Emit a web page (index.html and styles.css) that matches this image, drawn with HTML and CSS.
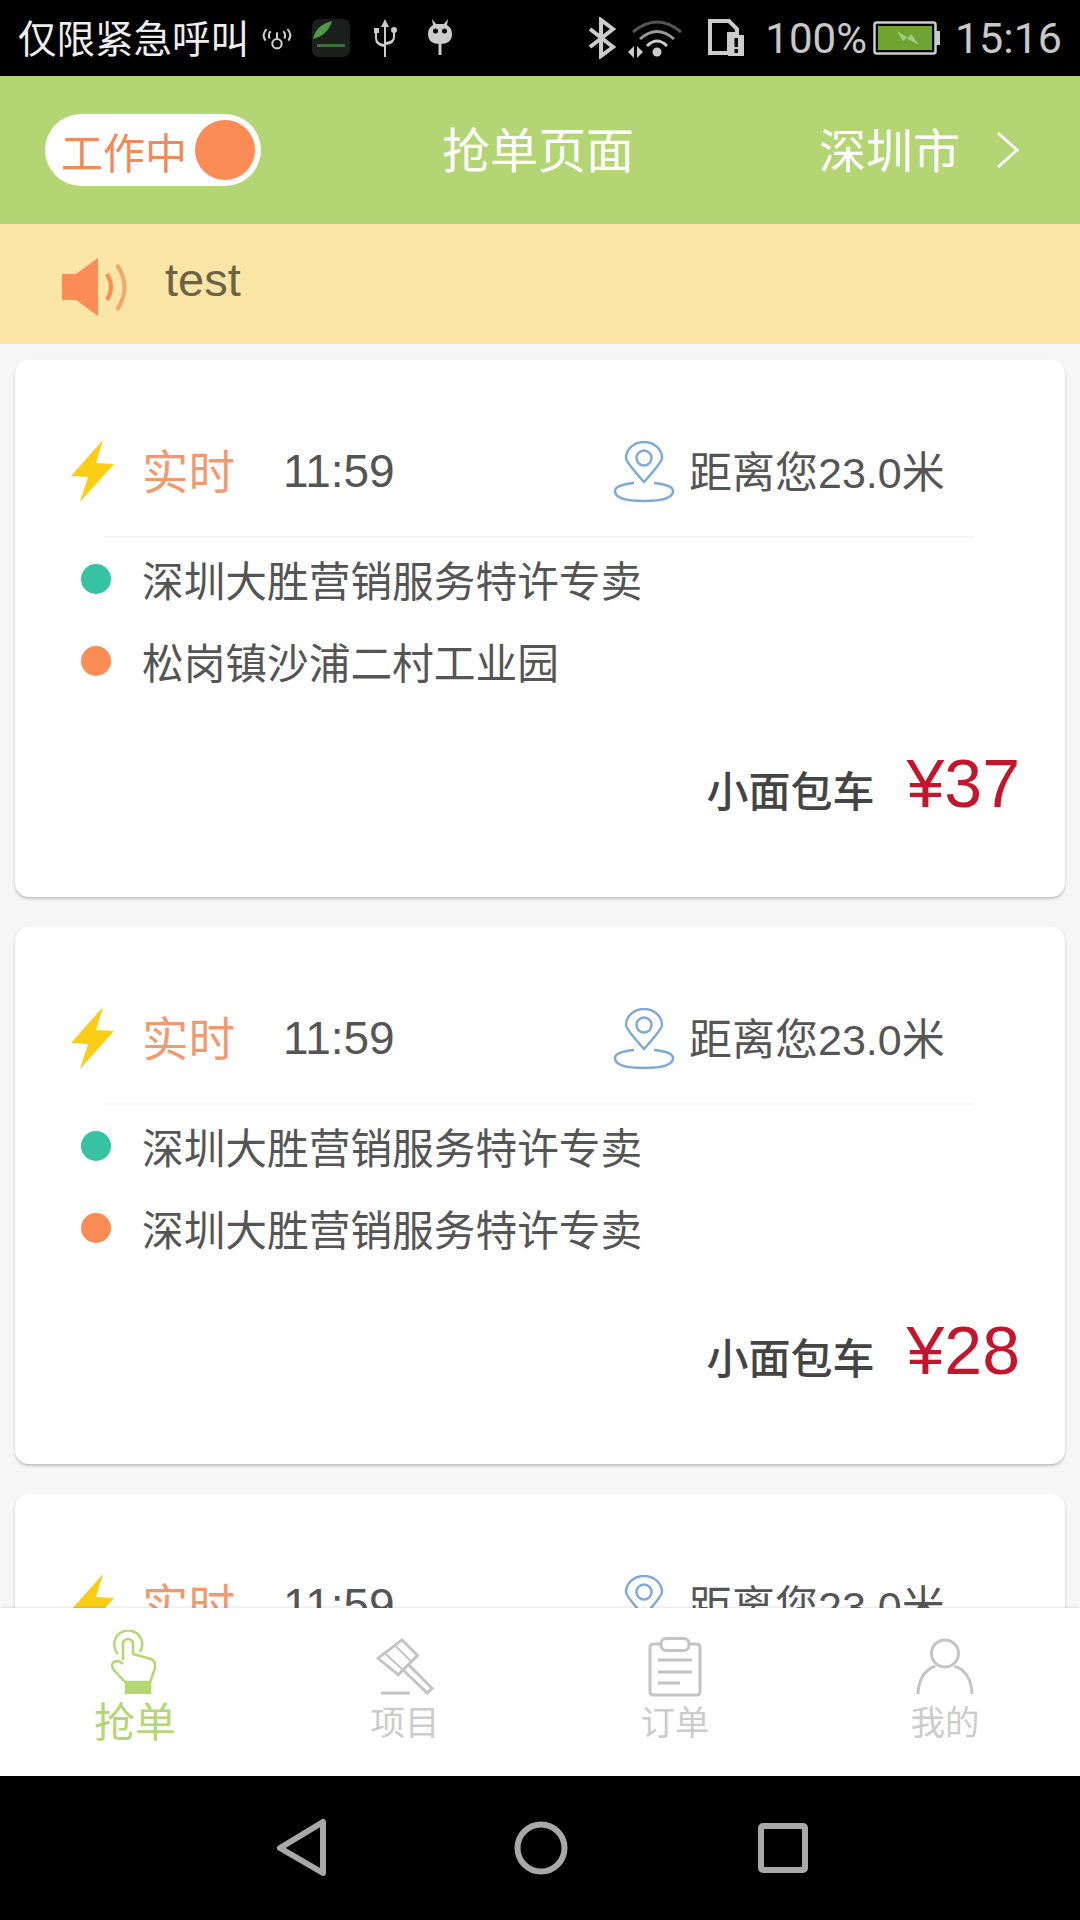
FILE: index.html
```html
<!DOCTYPE html>
<html>
<head>
  <meta charset="UTF-8">
  <title>抢单页面</title>
  <link rel="stylesheet" href="styles.css">
</head>
<body>
  <div class="phone">
    <div class="status-bar">
      <span class="carrier">仅限紧急呼叫</span>
      <svg class="st-signal" viewBox="0 0 34 24" fill="none" stroke="#ccc" stroke-width="2"><path d="M7 3Q2 8 6 14M11 5Q8 8 10 12M27 3Q32 8 28 14M23 5Q26 8 24 12"/><circle cx="17" cy="17" r="4.5"/><path d="M17 12V6"/></svg>
      <svg class="st-app" viewBox="0 0 38 38"><rect width="38" height="38" rx="7" fill="#1b1f1b"/><path d="M1 20Q4 6 20 2Q16 16 1 20Z" fill="#4f9a48"/><rect x="5" y="25" width="28" height="3" fill="#3f6f3c"/></svg>
      <svg class="st-usb" viewBox="0 0 24 38" fill="#ccc"><path d="M11 8V38H13V8ZM12 0L8 8H16Z"/><path d="M4 12V19Q4 24 11 25V28Q2 27 2 19V12ZM20 12V18Q20 22 13 23V26Q22 25 22 18V12Z"/><rect x="1" y="9" width="5" height="5"/><circle cx="21" cy="11" r="3"/></svg>
      <svg class="st-bug" viewBox="0 0 26 38" fill="#ccc"><path d="M5 0L9 5H17L21 0L20 6Q25 9 25 15Q25 25 13 25Q1 25 1 15Q1 9 6 6Z"/><rect x="11.5" y="25" width="3" height="11"/><circle cx="8.5" cy="12" r="2.5" fill="#000"/><circle cx="17.5" cy="12" r="2.5" fill="#000"/></svg>
      <span class="status-gap"></span>
      <svg class="st-bt" viewBox="0 0 30 42" fill="none" stroke="#ccc" stroke-width="4"><path d="M3 12L26 30L14 39V3L26 12L3 30"/></svg>
      <svg class="st-wifi" viewBox="0 0 56 40" fill="none"><path d="M6 14Q30 -6 54 14" stroke="#555" stroke-width="3"/><path d="M13 21Q30 6 47 21" stroke="#999" stroke-width="3"/><path d="M20 28Q30 18 40 28" stroke="#ccc" stroke-width="3"/><circle cx="30" cy="34" r="4.5" fill="#ccc"/><path d="M7 28L1 34L7 40ZM10 28L16 34L10 40Z" fill="#ccc"/></svg>
      <svg class="st-sim" viewBox="0 0 38 38"><path d="M3 2H22L30 10V15H22V34H3Z" fill="none" stroke="#ccc" stroke-width="4"/><rect x="21" y="16" width="16" height="21" fill="#ccc"/><rect x="27.5" y="19" width="3.5" height="9"/><rect x="27.5" y="30" width="3.5" height="4"/></svg>
      <span class="st-text st-percent">100%</span>
      <svg class="st-battery" viewBox="0 0 68 34"><rect x="1.5" y="1.5" width="61" height="31" rx="2" fill="#000" stroke="#ccc" stroke-width="2.5"/><rect x="5" y="5" width="54" height="24" fill="#6ea42f"/><rect x="63" y="10" width="4" height="14" fill="#ccc"/><path d="M24 10L35 17L38 13L46 24L33 17L30 20Z" fill="#a9c98a"/></svg>
      <span class="st-text st-time">15:16</span>
    </div>

    <div class="header">
      <div class="work-toggle">
        <span>工作中</span>
        <i class="work-dot"></i>
      </div>
      <div class="header-title">抢单页面</div>
      <div class="header-city">
        <span>深圳市</span>
        <svg class="city-arrow" viewBox="0 0 26 40" fill="none" stroke="#fff" stroke-width="3"><path d="M3 3L22 20L3 37"/></svg>
      </div>
    </div>

    <div class="notice">
      <svg class="notice-icon" viewBox="0 0 68 62" fill="#fb8c55"><path d="M0 18H14L36 2V60L14 44H0Z"/><path d="M45 18Q53 31 45 44" fill="none" stroke="#fb8c55" stroke-width="4"/><path d="M55 9Q70 31 55 54" fill="none" stroke="#f5a56e" stroke-width="4"/></svg>
      <span class="notice-text">test</span>
    </div>

    <div class="order-list">
      <div class="order-card">
        <div class="order-top">
          <svg class="bolt" viewBox="0 0 48 64"><path d="M35 1L3 37L20 38L12 63L46 25L28 24Z" fill="#fbcd14"/></svg>
          <span class="order-type">实时</span>
          <span class="order-time">11:59</span>
          <svg class="pin" viewBox="0 0 62 62" fill="none" stroke="#7fa9d6" stroke-width="2.5"><path d="M31 41Q13 21 13 17A18 16 0 0 1 49 17Q49 21 31 41Z"/><circle cx="31" cy="17" r="7.5"/><path d="M21 42Q2 44 2 50Q2 60 31 60Q60 60 60 50Q60 44 41 42"/></svg>
          <span class="order-distance">距离您23.0米</span>
        </div>
        <div class="order-address"><i class="dot dot-start"></i>深圳大胜营销服务特许专卖</div>
        <div class="order-address"><i class="dot dot-end"></i>松岗镇沙浦二村工业园</div>
        <div class="order-bottom">
          <span class="car-type">小面包车</span>
          <span class="order-price">¥37</span>
        </div>
      </div>

      <div class="order-card">
        <div class="order-top">
          <svg class="bolt" viewBox="0 0 48 64"><path d="M35 1L3 37L20 38L12 63L46 25L28 24Z" fill="#fbcd14"/></svg>
          <span class="order-type">实时</span>
          <span class="order-time">11:59</span>
          <svg class="pin" viewBox="0 0 62 62" fill="none" stroke="#7fa9d6" stroke-width="2.5"><path d="M31 41Q13 21 13 17A18 16 0 0 1 49 17Q49 21 31 41Z"/><circle cx="31" cy="17" r="7.5"/><path d="M21 42Q2 44 2 50Q2 60 31 60Q60 60 60 50Q60 44 41 42"/></svg>
          <span class="order-distance">距离您23.0米</span>
        </div>
        <div class="order-address"><i class="dot dot-start"></i>深圳大胜营销服务特许专卖</div>
        <div class="order-address"><i class="dot dot-end"></i>深圳大胜营销服务特许专卖</div>
        <div class="order-bottom">
          <span class="car-type">小面包车</span>
          <span class="order-price">¥28</span>
        </div>
      </div>

      <div class="order-card">
        <div class="order-top">
          <svg class="bolt" viewBox="0 0 48 64"><path d="M35 1L3 37L20 38L12 63L46 25L28 24Z" fill="#fbcd14"/></svg>
          <span class="order-type">实时</span>
          <span class="order-time">11:59</span>
          <svg class="pin" viewBox="0 0 62 62" fill="none" stroke="#7fa9d6" stroke-width="2.5"><path d="M31 41Q13 21 13 17A18 16 0 0 1 49 17Q49 21 31 41Z"/><circle cx="31" cy="17" r="7.5"/><path d="M21 42Q2 44 2 50Q2 60 31 60Q60 60 60 50Q60 44 41 42"/></svg>
          <span class="order-distance">距离您23.0米</span>
        </div>
      </div>
    </div>

    <div class="tab-bar">
      <div class="tab tab-active">
        <svg class="tab-icon tab-icon-hand" viewBox="0 0 52 64" fill="none" stroke="#b5d675" stroke-width="2.5"><path d="M9 24A14 14 0 1 1 31 22"/><path d="M14 30V14A5 5 0 0 1 24 14V24L42 29Q47 31 46 38L41 53H17L4 39Q1 32 8 31Q11 31 14 34"/><rect x="17" y="52" width="24" height="11" fill="#b5d675"/></svg>
        <span class="tab-label">抢单</span>
      </div>
      <div class="tab">
        <svg class="tab-icon" viewBox="0 0 60 60" fill="none" stroke="#c4c4c4" stroke-width="3"><path d="M27 2L43 18L23 38L2 21Z"/><path d="M19 7L37 25M8 15L27 32" stroke-width="2"/><path d="M33 27L58 52L53 57L27 32"/><path d="M5 57H35"/></svg>
        <span class="tab-label">项目</span>
      </div>
      <div class="tab">
        <svg class="tab-icon" viewBox="0 0 54 60" fill="none" stroke="#c4c4c4" stroke-width="3"><rect x="2" y="7" width="50" height="51" rx="3"/><rect x="13" y="1.500" width="28" height="12" rx="5" fill="#fff"/><path d="M10 23H44M10 35H44M10 46H32"/></svg>
        <span class="tab-label">订单</span>
      </div>
      <div class="tab">
        <svg class="tab-icon" viewBox="0 0 60 60" fill="none" stroke="#c4c4c4" stroke-width="3"><circle cx="30" cy="16" r="14"/><path d="M2 58Q3 35 20 29M58 58Q57 35 40 29"/></svg>
        <span class="tab-label">我的</span>
      </div>
    </div>

    <div class="nav-bar">
      <svg class="nav-back" viewBox="0 0 52 60" fill="none" stroke="#a8a8a8" stroke-width="6" stroke-linejoin="round"><path d="M47 4V55L4 30Z"/></svg>
      <svg class="nav-home" viewBox="0 0 54 54" fill="none" stroke="#a8a8a8" stroke-width="6"><circle cx="27" cy="27" r="23.500"/></svg>
      <svg class="nav-recent" viewBox="0 0 50 50" fill="none" stroke="#a8a8a8" stroke-width="6" stroke-linejoin="round"><rect x="3" y="3" width="44" height="44" rx="2"/></svg>
    </div>
  </div>
</body>
</html>
```

FILE: styles.css
```css
* {
  box-sizing: border-box;
}
body {
  margin: 0;
  font-family: "Liberation Sans", "Noto Sans CJK SC", sans-serif;
  background-color: #000;
}
svg {
  display: block;
  flex: none;
}
i {
  display: block;
  flex: none;
}
.phone {
  width: 1080px;
  height: 1920px;
  display: flex;
  flex-direction: column;
  overflow: hidden;
}

/* status bar */
.status-bar {
  height: 76px;
  flex: none;
  background-color: #000;
  display: flex;
  align-items: center;
  padding: 0 18px;
  color: #e8e8e8;
}
.carrier {
  font-size: 38.500px;
  color: #eee;
  margin-top: -4px;
}
.st-signal {
  width: 36px;
  height: 25px;
  margin-left: 10px;
}
.st-app {
  width: 38px;
  height: 38px;
  margin-left: 17px;
}
.st-usb {
  width: 24px;
  height: 38px;
  margin-left: 23px;
}
.st-bug {
  width: 26px;
  height: 38px;
  margin-left: 30px;
}
.status-gap {
  flex: 1;
}
.st-bt {
  width: 30px;
  height: 42px;
}
.st-wifi {
  width: 56px;
  height: 40px;
  margin-left: 10px;
}
.st-sim {
  width: 38px;
  height: 38px;
  margin-left: 24px;
}
.st-text {
  font-family: Roboto, sans-serif;
  font-size: 43px;
  color: #c8c8c8;
}
.st-percent {
  font-size: 42px;
  margin-left: 20px;
}
.st-battery {
  width: 68px;
  height: 34px;
  margin-left: 6px;
}
.st-time {
  margin-left: 14px;
}

/* header */
.header {
  height: 148px;
  flex: none;
  background-color: #b4d574;
  display: flex;
  align-items: center;
  position: relative;
  padding: 0 45px;
  color: #fff;
}
.work-toggle {
  width: 216px;
  height: 72px;
  border-radius: 36px;
  background-color: #fff;
  display: flex;
  align-items: center;
  justify-content: space-between;
  padding: 0 6px 0 16px;
  color: #f08a58;
  font-size: 42px;
}
.work-dot {
  width: 60px;
  height: 60px;
  border-radius: 50%;
  background-color: #fb8c55;
}
.header-title {
  flex: 1;
  text-align: center;
  font-size: 48px;
  padding-right: 4px;
  margin-top: -6px;
}
.header-city {
  display: flex;
  align-items: center;
  font-size: 47px;
  margin-right: 14px;
  margin-top: -6px;
}
.city-arrow {
  width: 26px;
  height: 40px;
  margin-left: 35px;
  margin-top: 6px;
}

/* notice */
.notice {
  height: 120px;
  flex: none;
  background-color: #fbe6a8;
  display: flex;
  align-items: center;
  padding-left: 62px;
}
.notice-icon {
  width: 68px;
  height: 62px;
  margin-top: 6px;
}
.notice-text {
  font-size: 47px;
  color: #6b6343;
  margin-left: 35px;
  margin-bottom: 10px;
}

/* orders */
.order-list {
  flex: 1;
  min-height: 0;
  overflow: hidden;
  background-color: #f6f6f6;
  padding: 16px 15px 0;
}
.order-card {
  height: 537px;
  background-color: #fff;
  border-radius: 14px;
  box-shadow: 0 2px 3px rgba(0, 0, 0, 0.22);
  margin-bottom: 30px;
  padding: 0 45px 0 0;
}
.order-top {
  height: 178px;
  display: flex;
  align-items: center;
  padding-top: 43px;
  position: relative;
}
.order-top::after {
  content: "";
  position: absolute;
  left: 89px;
  right: 46px;
  bottom: 0;
  height: 2px;
  background-color: #f7f7f7;
}
.bolt {
  width: 52px;
  height: 64px;
  margin-left: 51px;
}
.order-type {
  font-size: 46.500px;
  color: #f09a70;
  margin-left: 24px;
  margin-top: -4px;
}
.order-time {
  font-size: 46px;
  color: #555;
  margin-left: 48px;
  width: 330px;
}
.pin {
  width: 62px;
  height: 62px;
  margin-top: 2px;
}
.order-distance {
  font-size: 43px;
  color: #555;
  margin-left: 14px;
  margin-top: -4px;
  white-space: nowrap;
}
.order-address {
  height: 82px;
  display: flex;
  align-items: center;
  font-size: 41.700px;
  color: #555;
  padding-left: 66px;
}
.dot {
  width: 30px;
  height: 30px;
  border-radius: 50%;
  margin-right: 31px;
}
.dot-start {
  background-color: #37c2a2;
}
.dot-end {
  background-color: #fb8c55;
}
.order-bottom {
  display: flex;
  justify-content: flex-end;
  align-items: baseline;
  margin-top: 42px;
}
.car-type {
  font-size: 42px;
  font-weight: 500;
  color: #444;
}
.order-price {
  font-size: 68px;
  color: #c3162c;
  margin-left: 32px;
}

/* tabs */
.tab-bar {
  height: 168px;
  flex: none;
  background-color: #fff;
  display: grid;
  grid-template-columns: repeat(4, 270px);
  box-shadow: 0 -1px 3px rgba(0, 0, 0, 0.1);
  position: relative;
}
.tab {
  display: flex;
  flex-direction: column;
  align-items: center;
  justify-content: flex-end;
  padding-bottom: 33px;
  color: #ccc;
  font-size: 34.500px;
}
.tab-icon {
  width: 58px;
  height: 60px;
}
.tab-icon-hand {
  width: 52px;
  height: 64px;
}
.tab-label {
  line-height: 40px;
  margin-top: 6px;
}
.tab-active {
  color: #b5d675;
  font-size: 41px;
}
.tab-active .tab-label {
  margin-top: 9px;
}

/* nav */
.nav-bar {
  height: 144px;
  flex: none;
  background-color: #000;
  position: relative;
  display: flex;
  align-items: center;
  padding-left: 276px;
}
.nav-back {
  width: 52px;
  height: 60px;
}
.nav-home {
  width: 54px;
  height: 54px;
  margin-left: 186px;
}
.nav-recent {
  width: 50px;
  height: 50px;
  margin-left: 190px;
}
```
